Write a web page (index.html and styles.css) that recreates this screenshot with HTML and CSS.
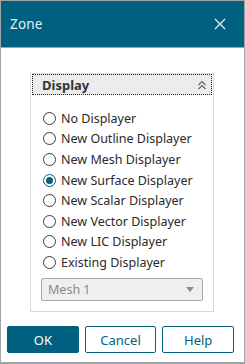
FILE: index.html
```html
<!DOCTYPE html>
<html lang="en">
<head>
    <meta charset="UTF-8">
    <title>Zone</title>
    <link rel="stylesheet" href="styles.css">
</head>
<body>
    <div class="dialog">
        <header class="titlebar">
            <span class="title">Zone</span>
            <svg class="close" width="12" height="12" viewBox="0 0 12 12">
                <path d="M1 1 L11 11 M11 1 L1 11" stroke="#e3edf1" stroke-width="1.3" fill="none"/>
            </svg>
        </header>

        <main class="content">
            <section class="group">
                <div class="group-head">
                    <span>Display</span>
                    <svg width="10" height="10" viewBox="0 0 10 10">
                        <path d="M1.5 5 L5 1.5 L8.5 5 M1.5 9 L5 5.5 L8.5 9" stroke="#666" stroke-width="1.2" fill="none"/>
                    </svg>
                </div>

                <div class="options">
                    <label class="option"><span class="radio"></span>No Displayer</label>
                    <label class="option"><span class="radio"></span>New Outline Displayer</label>
                    <label class="option"><span class="radio"></span>New Mesh Displayer</label>
                    <label class="option"><span class="radio checked"></span>New Surface Displayer</label>
                    <label class="option"><span class="radio"></span>New Scalar Displayer</label>
                    <label class="option"><span class="radio"></span>New Vector Displayer</label>
                    <label class="option"><span class="radio"></span>New LIC Displayer</label>
                    <label class="option"><span class="radio"></span>Existing Displayer</label>
                </div>

                <div class="combo">
                    <span>Mesh 1</span>
                    <span class="arrow"></span>
                </div>
            </section>
        </main>

        <footer class="buttons">
            <button class="btn primary">OK</button>
            <button class="btn">Cancel</button>
            <button class="btn">Help</button>
        </footer>
    </div>
</body>
</html>
```

FILE: styles.css
```css
/* Zone dialog */
body {
    margin: 0;
    font-family: "Noto Sans", "Open Sans", sans-serif;
    background: #fff;
}
.dialog {
    width: 245px;
    height: 364px;
    box-sizing: border-box;
    border: 1px solid #a3a3a3;
    border-bottom-width: 2px;
    display: flex;
    flex-direction: column;
    background: #fff;
}
.titlebar {
    height: 46px;
    background-color: #00607f;
    color: #e6eef2;
    border-bottom: 1px solid #9aa6ab;
    display: flex;
    align-items: center;
    justify-content: space-between;
    padding: 0 18px 0 9px;
}
.title {
    font-size: 13.5px;
    letter-spacing: 0.2px;
}
.content {
    padding: 25px 29px 0 29px;
    flex: 1;
}
.group {
    width: 184px;
    height: 239px;
    box-sizing: border-box;
    border: 1px solid #d9d9d9;
    padding: 0 1px;
}
.group-head {
    height: 21px;
    margin-top: 0;
    box-sizing: border-box;
    border: 1px dotted #222;
    background: #ececec;
    display: flex;
    align-items: center;
    justify-content: space-between;
    padding: 0 4px 0 9px;
    font-size: 13px;
    font-weight: bold;
    color: #333;
}
.options {
    padding: 13px 0 0 11px;
}
.option {
    display: flex;
    align-items: center;
    height: 20.6px;
    font-size: 12.5px;
    color: #2a2a2a;
}
.radio {
    width: 13px;
    height: 13px;
    box-sizing: border-box;
    border: 1px solid #3a3a3a;
    border-radius: 50%;
    margin-right: 5px;
    position: relative;
}
.radio.checked {
    border-color: #00607f;
}
.radio.checked::after {
    content: "";
    position: absolute;
    left: 2px;
    top: 2px;
    width: 7px;
    height: 7px;
    border-radius: 50%;
    background: #00607f;
}
.combo {
    margin: 5px 0 0 9px;
    width: 162px;
    height: 23px;
    box-sizing: border-box;
    border: 1px solid #a8a8a8;
    border-radius: 2px;
    background: #efefef;
    color: #8a8a8a;
    font-size: 12.5px;
    display: flex;
    align-items: center;
    justify-content: space-between;
    padding: 0 8px 0 6px;
}
.arrow {
    width: 0;
    height: 0;
    border-left: 4px solid transparent;
    border-right: 4px solid transparent;
    border-top: 5px solid #8c8c8c;
}
.buttons {
    display: flex;
    gap: 6px;
    padding: 0 10px 9px 6px;
}
.btn {
    width: 72px;
    height: 27px;
    border: 1px solid #00607f;
    border-radius: 2px;
    background: #fff;
    color: #00607f;
    font-family: inherit;
    font-size: 13px;
    padding: 0;
}
.btn.primary {
    background: #00607f;
    color: #fff;
}
```
